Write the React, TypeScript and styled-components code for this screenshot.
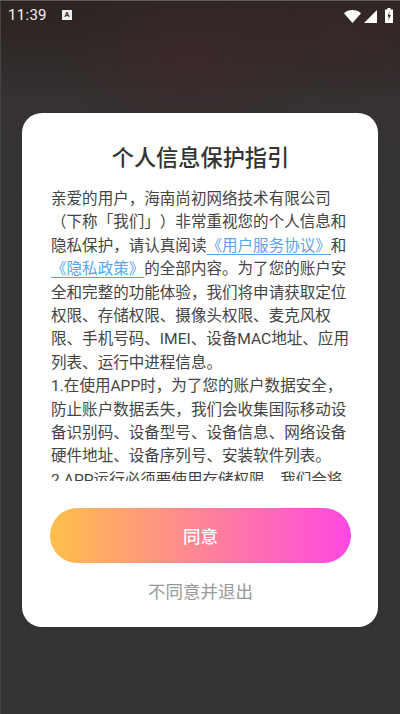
import React from 'react';
import styled, {createGlobalStyle} from 'styled-components';

const GlobalStyle = createGlobalStyle`
  html, body {
    margin: 0;
    padding: 0;
    background: #333333;
  }
  * {
    box-sizing: border-box;
  }
`;

const App = () => {
    return (
        <Screen>
            <GlobalStyle />
            <StatusBar>
                <StatusLeft>
                    <Time>11:39</Time>
                    <NotifyBadge>A</NotifyBadge>
                </StatusLeft>
                <StatusRight>
                    <svg width="17" height="13" viewBox="0 0 17 13">
                        <path d="M0 3.2C4.5 -1 12.5 -1 17 3.2L8.5 13Z" fill="#fff" />
                    </svg>
                    <svg width="13" height="13" viewBox="0 0 13 13">
                        <path d="M13 0V13H0Z" fill="#fff" />
                    </svg>
                    <BatteryIcon width="8" height="15" viewBox="0 0 8 15">
                        <path d="M2.5 0H5.5V1.5H8V15H0V1.5H2.5Z" fill="#fff" />
                        <path d="M4.6 3.5L2.4 8.5H3.8L3.4 12.5L5.8 7H4.3Z" fill="#333" />
                    </BatteryIcon>
                </StatusRight>
            </StatusBar>
            <Card>
                <Title>个人信息保护指引</Title>
                <Content>
                    亲爱的用户，海南尚初网络技术有限公司（下称「我们」）非常重视您的个人信息和隐私保护，请认真阅读
                    <PolicyLink>《用户服务协议》</PolicyLink>和<PolicyLink>《隐私政策》</PolicyLink>
                    的全部内容。为了您的账户安全和完整的功能体验，我们将申请获取定位权限、存储权限、摄像头权限、麦克风权限、手机号码、IMEI、设备MAC地址、应用列表、运行中进程信息。
                    <br />
                    1.在使用APP时，为了您的账户数据安全，防止账户数据丢失，我们会收集国际移动设备识别码、设备型号、设备信息、网络设备硬件地址、设备序列号、安装软件列表。
                    <br />
                    2.APP运行必须要使用存储权限，我们会将
                </Content>
                <AgreeButton>同意</AgreeButton>
                <RefuseButton>不同意并退出</RefuseButton>
            </Card>
        </Screen>
    );
};

const Screen = styled.div`
  width: 400px;
  height: 714px;
  overflow: hidden;
  display: flex;
  flex-direction: column;
  align-items: center;
  box-shadow: inset 0 1px 0 #5c5c5c, inset 1px 0 0 #444444;
  background:
    radial-gradient(ellipse 130px 90px at 190px 60px, rgba(62, 40, 44, 0.8) 0%, rgba(62, 40, 44, 0) 100%),
    radial-gradient(ellipse 130px 70px at 340px 35px, rgba(60, 40, 44, 0.7) 0%, rgba(60, 40, 44, 0) 100%),
    linear-gradient(180deg, #2c2423 0%, #2e2726 5%, #353231 14%, #333333 40%);
  font-family: "Roboto", "Noto Sans CJK SC", sans-serif;
`;

const StatusBar = styled.div`
  width: 100%;
  height: 29px;
  padding: 1px 7px 0 8px;
  display: flex;
  align-items: center;
  justify-content: space-between;
`;

const StatusLeft = styled.div`
  display: flex;
  align-items: center;
  gap: 15px;
`;

const Time = styled.span`
  color: #f2f2f2;
  font-size: 15px;
  letter-spacing: 0.3px;
`;

const NotifyBadge = styled.span`
  width: 10px;
  height: 10px;
  background: #f0f0f0;
  color: #333;
  font-size: 8px;
  font-weight: 700;
  line-height: 10px;
  text-align: center;
`;

const StatusRight = styled.div`
  display: flex;
  align-items: flex-end;
  gap: 3px;
`;

const BatteryIcon = styled.svg`
  margin-left: 5px;
`;

const Card = styled.div`
  width: 356px;
  height: 514px;
  margin-top: 84px;
  padding: 32px 28px 0 29px;
  border-radius: 20px;
  background: #ffffff;
  display: flex;
  flex-direction: column;
  align-items: center;
`;

const Title = styled.h1`
  margin: 0;
  color: #333333;
  font-size: 22.2px;
  font-weight: 500;
  line-height: 26px;
`;

const Content = styled.div`
  width: 100%;
  height: 293px;
  margin-top: 17px;
  overflow: hidden;
  color: #444444;
  font-size: 15.55px;
  line-height: 23.4px;
  text-spacing-trim: space-all;
`;

const PolicyLink = styled.a`
  color: #5ba4f5;
  text-decoration: underline 1px;
  text-decoration-skip-ink: none;
  text-underline-offset: 3px;
`;

const AgreeButton = styled.button`
  width: 301px;
  height: 55px;
  margin-top: 27px;
  flex-shrink: 0;
  border: none;
  border-radius: 28px;
  background: linear-gradient(90deg, #ffc04a 0%, #ff48e2 100%);
  color: #ffffff;
  font-family: inherit;
  font-size: 17.5px;
  font-weight: 500;
`;

const RefuseButton = styled.button`
  margin-top: 16px;
  padding: 0;
  border: none;
  background: transparent;
  color: #999999;
  font-family: inherit;
  font-size: 17.5px;
  line-height: 26px;
`;

export default App;
